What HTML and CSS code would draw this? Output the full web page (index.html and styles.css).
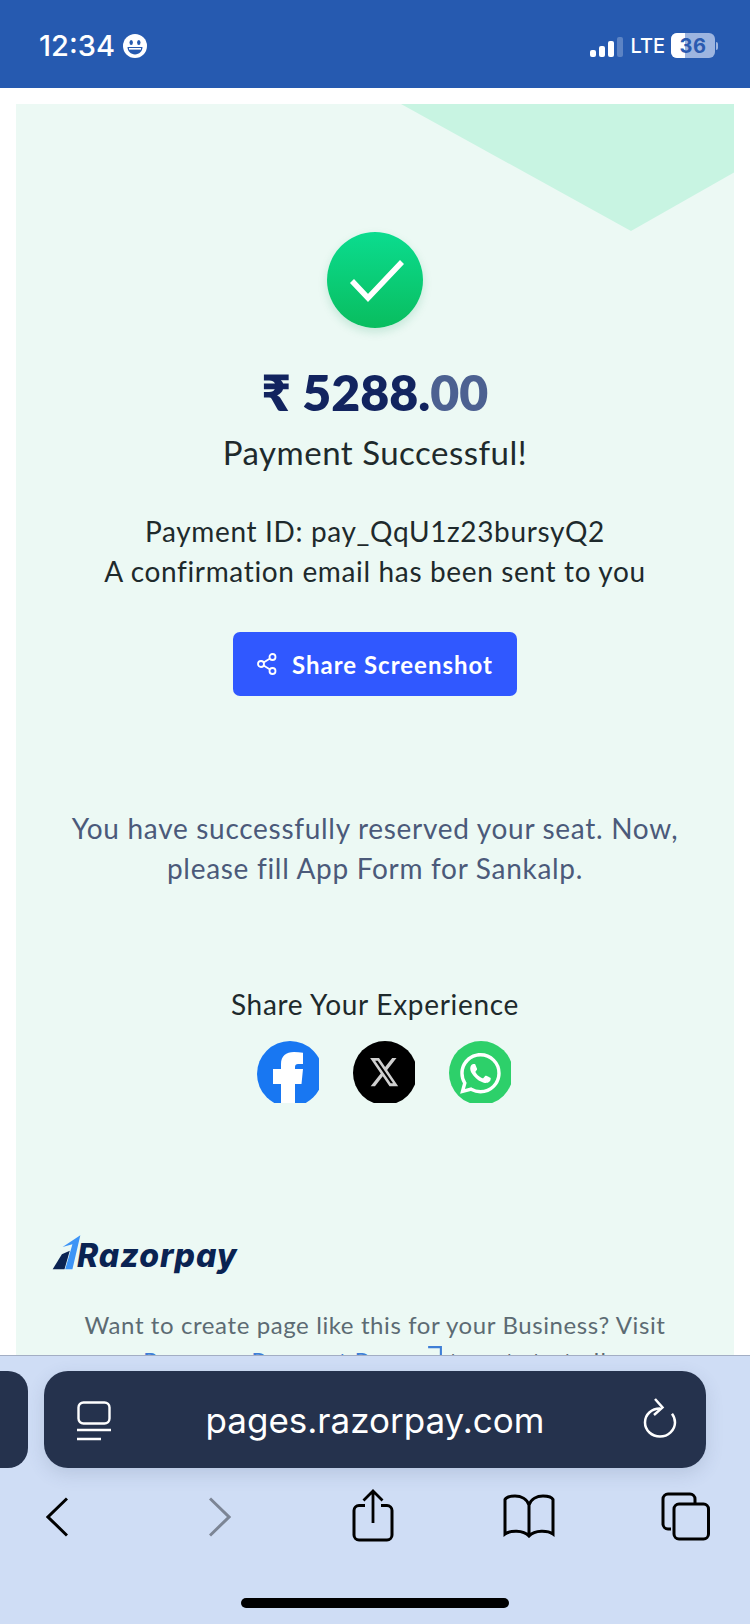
FILE: index.html
```html
<!DOCTYPE html>
<html lang="en">
<head>
<meta charset="utf-8">
<title>Payment Successful</title>
<link rel="stylesheet" href="styles.css">
</head>
<body>
<div class="app">
  <header class="status">
    <div class="status-left">
      <span class="time">12:34</span>
      <svg class="smiley" viewBox="0 0 24 24"><circle cx="12" cy="12" r="12" fill="#fff"/><ellipse cx="8.2" cy="8.6" rx="1.7" ry="2.5" fill="#265ab0"/><ellipse cx="15.8" cy="8.6" rx="1.7" ry="2.5" fill="#265ab0"/><path d="M4.500 13h15c0 4.400-3.300 7.400-7.500 7.400S4.500 17.400 4.500 13z" fill="#265ab0"/><path d="M6 14h12v1.600H6z" fill="#fff"/></svg>
    </div>
    <div class="status-right">
      <svg class="signal" viewBox="0 0 34 20"><rect x="0" y="13" width="6" height="7" rx="2" fill="#fff"/><rect x="9" y="9" width="6" height="11" rx="2" fill="#fff"/><rect x="18" y="4" width="6" height="16" rx="2" fill="#fff"/><rect x="27" y="0" width="6" height="20" rx="2" fill="#fff" opacity=".25"/></svg>
      <span class="lte">LTE</span>
      <div class="battery"><span class="battery-fill"></span><span class="battery-num">36</span></div>
      <span class="battery-cap"></span>
    </div>
  </header>

  <main class="viewport">
    <section class="card">
      <div class="corner"></div>
      <div class="check">
        <svg viewBox="0 0 96 96" class="check-svg"><path d="M25 49l16 17 34-36" fill="none" stroke="#fff" stroke-width="5.500"/></svg>
      </div>
      <h1 class="amount">₹ 5288.<span class="decimals">00</span></h1>
      <p class="title">Payment Successful!</p>
      <p class="details">Payment ID: pay_QqU1z23bursyQ2<br>A confirmation email has been sent to you</p>
      <button class="share-btn">
        <svg class="share-ic" viewBox="0 0 20 22"><circle cx="15.500" cy="4" r="3" fill="none" stroke="#fff" stroke-width="1.800"/><circle cx="15.500" cy="18" r="3" fill="none" stroke="#fff" stroke-width="1.800"/><circle cx="4" cy="11" r="3" fill="none" stroke="#fff" stroke-width="1.800"/><path d="M6.600 9.500l6.400-4M6.600 12.500l6.400 4" stroke="#fff" stroke-width="1.800"/></svg>
        <span>Share Screenshot</span>
      </button>
      <p class="message">You have successfully reserved your seat. Now,<br>please fill App Form for Sankalp.</p>
      <p class="exp">Share Your Experience</p>
      <div class="socials">
        <svg class="soc" viewBox="0 0 62 62"><circle cx="33" cy="33" r="33" fill="#1877f2"/><path d="M24 62V43H16V28H24V23C24 15 29 11 37 11c3 0 6 .4 9 .7V23H41c-2 0-3 1-3 3v2h8l-1.500 15H38v19z" fill="#fff"/></svg>
        <svg class="soc" viewBox="0 0 62 62"><circle cx="32" cy="32" r="32" fill="#000"/><g transform="translate(15.500 13.700) scale(1.300 1.450)"><path d="M18.244 2.250h3.308l-7.227 8.260 8.502 11.240H16.170l-5.214-6.817L4.990 21.750H1.680l7.730-8.835L1.254 2.250H8.080l4.713 6.231zm-1.161 17.520h1.833L7.084 4.126H5.117z" fill="#cfcfcf"/></g></svg>
        <svg class="soc" viewBox="0 0 62 62"><circle cx="32" cy="32" r="32" fill="#2dd06a"/><g transform="translate(11 12) scale(1.700)"><path fill="#fff" d="M17.472 14.382c-.297-.149-1.758-.867-2.030-.967-.273-.099-.471-.148-.670.150-.197.297-.767.966-.940 1.164-.173.199-.347.223-.644.075-.297-.150-1.255-.463-2.390-1.475-.883-.788-1.480-1.761-1.653-2.059-.173-.297-.018-.458.130-.606.134-.133.298-.347.446-.520.149-.174.198-.298.298-.497.099-.198.050-.371-.025-.520-.075-.149-.669-1.612-.916-2.207-.242-.579-.487-.500-.669-.510-.173-.008-.371-.010-.570-.010-.198 0-.520.074-.792.372-.272.297-1.040 1.016-1.040 2.479 0 1.462 1.065 2.875 1.213 3.074.149.198 2.096 3.200 5.077 4.487.709.306 1.262.489 1.694.625.712.227 1.360.195 1.871.118.571-.085 1.758-.719 2.006-1.413.248-.694.248-1.289.173-1.413-.074-.124-.272-.198-.570-.347m-5.421 7.403h-.004a9.870 9.870 0 01-5.031-1.378l-.361-.214-3.741.982.998-3.648-.235-.374a9.860 9.860 0 01-1.510-5.260c.001-5.450 4.436-9.884 9.888-9.884 2.640 0 5.122 1.030 6.988 2.898a9.825 9.825 0 012.893 6.994c-.003 5.450-4.437 9.884-9.885 9.884m8.413-18.297A11.815 11.815 0 0012.050 0C5.495 0 .160 5.335.157 11.892c0 2.096.547 4.142 1.588 5.945L.057 24l6.305-1.654a11.882 11.882 0 005.683 1.448h.005c6.554 0 11.890-5.335 11.893-11.893a11.821 11.821 0 00-3.480-8.413Z"/></g></svg>
      </div>
      <div class="brand">
        <svg class="brand-mark" viewBox="10 14 88 106"><path d="M12 118l28-46 24-10-16 56z" fill="#0a2352"/><path d="M96 15L42 50l30-8-22 76h22z" fill="#3d94f6"/></svg>
        <span class="brand-name">Razorpay</span>
      </div>
      <p class="foot">Want to create page like this for your Business? Visit<br><span class="foot-link">Razorpay Payment Pages</span> <svg class="ext" viewBox="0 0 16 16"><path d="M2 2h12v12" fill="none" stroke="#3f7fd6" stroke-width="2"/></svg> to get started!</p>
    </section>
  </main>

  <footer class="toolbar">
    <div class="url-row">
      <div class="tab-stub"></div>
      <div class="url-bar">
        <svg class="reader" viewBox="0 0 34 40"><rect x="1.500" y="1.500" width="31" height="21" rx="5" fill="none" stroke="#fff" stroke-width="2.400"/><path d="M0 29h34M0 38h24" stroke="#fff" stroke-width="2.600"/></svg>
        <span class="url">pages.razorpay.com</span>
        <svg class="reload" viewBox="0 0 34 40"><path d="M17 10.500C8.500 10.500 2 16.500 2 24.500c0 8 6.800 14 15 14s15-6.500 15-14c0-3.500-1.200-6.500-3-8.800" fill="none" stroke="#fff" stroke-width="2.500"/><path d="M12 1l7.500 8.500L11 17" fill="none" stroke="#fff" stroke-width="2.500"/></svg>
      </div>
    </div>
    <nav class="nav-row">
      <svg class="ic ic-back" viewBox="0 0 22 40"><path d="M21 1.500L2 20l19 18.500" fill="none" stroke="#000" stroke-width="3"/></svg>
      <svg class="ic ic-fwd" viewBox="0 0 22 40"><path d="M1 1.500L20 20 1 38.500" fill="none" stroke="#7c8595" stroke-width="3"/></svg>
      <svg class="ic ic-share" viewBox="0 0 42 53"><path d="M13 16.500H7a5 5 0 00-5 5V46a5 5 0 005 5h28a5 5 0 005-5V21.500a5 5 0 00-5-5h-6" fill="none" stroke="#000" stroke-width="3"/><path d="M21 34V2M11.500 11.500L21 2l9.500 9.500" fill="none" stroke="#000" stroke-width="2.800"/></svg>
      <svg class="ic ic-book" viewBox="0 0 52 44"><path d="M26 40.500V11C24 5 18 2 12 2 7 2 3 3.500 2 5.500V40c5-3.500 18-4.500 24 2 6-6.500 19-5.500 24-2V5.500C49 3.500 45 2 40 2 34 2 28 5 26 11" fill="none" stroke="#000" stroke-width="3"/></svg>
      <svg class="ic ic-tabs" viewBox="0 0 49 49"><path d="M10 37H7a5 5 0 01-5-5V7a5 5 0 015-5h22a5 5 0 015 5v4" fill="none" stroke="#000" stroke-width="3"/><rect x="13" y="12" width="34.500" height="35" rx="5" fill="none" stroke="#000" stroke-width="3"/></svg>
    </nav>
    <div class="home-bar"></div>
  </footer>
</div>
</body>
</html>
```
FILE: styles.css
```css
* { box-sizing: border-box; }
html, body { margin: 0; padding: 0; }
body { width: 750px; height: 1624px; overflow: hidden; background: #fff; font-family: "Lato", "Noto Sans", sans-serif; }
h1, p { margin: 0; }

.app { width: 750px; height: 1624px; display: flex; flex-direction: column; overflow: hidden; }

/* status bar */
.status { height: 88px; flex: none; background: #265ab0; display: flex; justify-content: space-between; align-items: center; padding: 3px 32px 0 39px; color: #fff; }
.status-left { display: flex; align-items: center; gap: 8px; }
.time { font-family: "Inter", sans-serif; font-size: 29px; font-weight: 500; line-height: 32px; }
.smiley { width: 24px; height: 24px; }
.status-right { display: flex; align-items: center; }
.signal { width: 34px; height: 20px; margin-top: 2px; }
.lte { font-family: "Inter", sans-serif; font-size: 20px; font-weight: 500; margin-left: 6px; line-height: 24px; }
.battery { position: relative; width: 44px; height: 25px; margin-left: 6px; border-radius: 6px; overflow: hidden; background: #9db5e0; display: flex; align-items: center; justify-content: center; }
.battery-fill { position: absolute; left: 0; top: 0; bottom: 0; width: 14px; background: #fff; }
.battery-num { position: relative; font-family: "Inter", sans-serif; font-size: 20px; font-weight: 700; color: #2a5ab0; letter-spacing: .5px; }
.battery-cap { width: 2px; height: 8px; margin-left: 1px; background: #9db5e0; border-radius: 0 2px 2px 0; }

/* page */
.viewport { flex: 1; min-height: 0; overflow: hidden; padding: 16px 16px 0; }
.card { position: relative; background: #ecf9f4; padding-top: 128px; text-align: center; height: 1400px; }
.corner { position: absolute; left: 385px; right: 0; top: 0; height: 127px; background: #c8f4e2; clip-path: polygon(0 0, 100% 0, 100% 54%, 230px 100%); }
.check { position: relative; width: 96px; height: 96px; border-radius: 50%; margin: 0 auto; background: linear-gradient(180deg, #0bdc8f 0%, #09bd5f 100%); box-shadow: 0 4px 10px rgba(9, 150, 90, .18); }
.check-svg { display: block; width: 96px; height: 96px; }
.amount { margin-top: 34px; font-size: 50px; line-height: 60px; font-weight: 800; color: #12245f; font-family: "Lato", "Noto Sans", sans-serif; }
.decimals { color: #4c6191; }
.title { margin-top: 9px; font-size: 33px; line-height: 42px; letter-spacing: .5px; color: #1e2a2c; }
.details { margin-top: 38px; font-size: 28px; line-height: 40px; letter-spacing: .65px; color: #1e2a2c; }
.share-btn { display: flex; align-items: center; justify-content: center; gap: 15px; width: 284px; height: 64px; margin: 41px auto 0; border: 0; border-radius: 7px; background: #3058ff; color: #fff; font: 700 24px "Lato", sans-serif; letter-spacing: 1px; }
.share-ic { width: 20px; height: 22px; }
.message { margin-top: 112px; font-size: 28px; line-height: 40px; letter-spacing: .7px; color: #4b5a7a; }
.exp { margin-top: 98px; font-size: 28px; line-height: 36px; letter-spacing: .7px; color: #1e2a2c; }
.socials { display: flex; justify-content: center; gap: 34px; margin-top: 19px; padding-left: 18px; }
.soc { width: 62px; height: 62px; display: block; }
.brand { display: flex; align-items: flex-end; gap: 0; margin: 133px 0 0 36px; height: 40px; }
.brand-mark { width: 29px; height: 35px; margin: 0 -4px 6px 0; }
.brand-name { font-family: "Inter", sans-serif; font-size: 32px; line-height: 40px; font-weight: 800; font-style: italic; color: #0a2352; letter-spacing: 1px; }
.foot { margin-top: 31px; font-size: 24px; line-height: 36px; letter-spacing: .6px; color: #5c6b73; }
.foot-link { color: #3f7fd6; }
.ext { width: 17px; height: 17px; vertical-align: 8px; }

/* browser toolbar */
.toolbar { flex: none; height: 269px; position: relative; background: #cfddf5; border-top: 1px solid #a3aec4; display: flex; flex-direction: column; }
.url-row { display: flex; gap: 16px; margin: 15px 44px 0 0; }
.tab-stub { width: 28px; height: 97px; flex: none; background: #25324d; border-radius: 0 20px 20px 0; }
.url-bar { flex: 1; height: 97px; background: #25324d; border-radius: 24px; display: flex; align-items: center; padding: 0 29px 0 33px; color: #fff; box-shadow: 0 6px 18px rgba(60, 80, 120, .16); }
.reader { width: 34px; height: 40px; flex: none; margin-top: 2px; }
.url { flex: 1; text-align: center; font-family: "Inter", sans-serif; font-size: 35px; font-weight: 400; padding-right: 4px; }
.reload { width: 34px; height: 40px; flex: none; margin-top: -4px; }
.nav-row { display: flex; align-items: flex-start; height: 75px; margin-top: 21px; }
.ic { display: block; flex: none; }
.ic-back { width: 22px; height: 40px; margin: 8px 0 0 46px; }
.ic-fwd { width: 22px; height: 40px; margin: 8px 0 0 141px; }
.ic-share { width: 42px; height: 53px; margin-left: 121px; }
.ic-book { width: 52px; height: 44px; margin: 5px 0 0 109px; }
.ic-tabs { width: 49px; height: 49px; margin: 3px 0 0 106px; }
.home-bar { width: 268px; height: 10px; border-radius: 5px; background: #000; margin: 34px auto 0; }
```
